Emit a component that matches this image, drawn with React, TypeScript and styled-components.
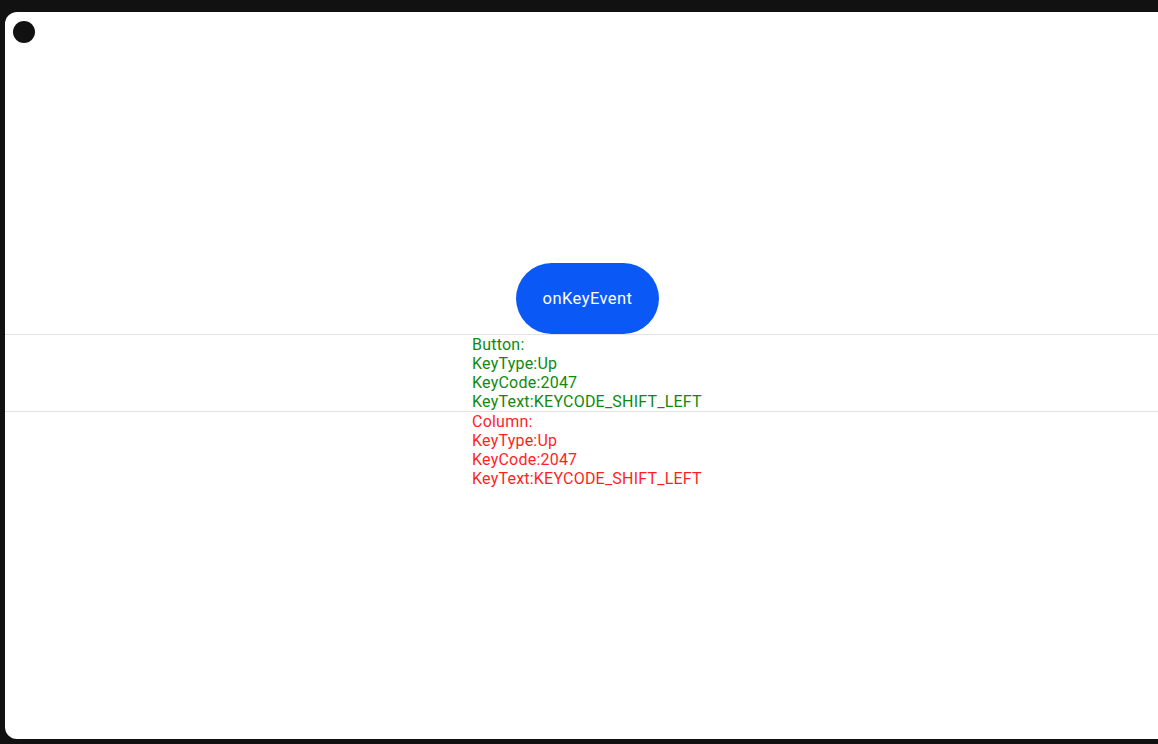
import styled, { createGlobalStyle } from "styled-components";

const GlobalStyle = createGlobalStyle`
  html, body {
    margin: 0;
    padding: 0;
    width: 1158px;
    height: 744px;
    overflow: hidden;
    background: #111111;
  }
`;

const Frame = styled.div`
  width: 1158px;
  height: 744px;
  box-sizing: border-box;
  padding: 12px 0 5px 5px;
  background: #111111;
  overflow: hidden;
`;

const Screen = styled.div`
  position: relative;
  width: 1165px;
  height: 727px;
  background: #ffffff;
  border-radius: 12px 0 0 12px;
  display: flex;
  flex-direction: column;
  justify-content: center;
  font-family: "Roboto", "Noto Sans", sans-serif;
`;

const Camera = styled.div`
  position: absolute;
  left: 8px;
  top: 9px;
  width: 22px;
  height: 22px;
  border-radius: 50%;
  background: #111111;
`;

const KeyButton = styled.button`
  align-self: center;
  width: 143px;
  height: 71px;
  border: none;
  border-radius: 36px;
  background: #0a59f7;
  color: #ffffff;
  font-family: inherit;
  font-size: 16.5px;
  letter-spacing: 0.45px;
  padding: 0;
`;

const Divider = styled.div`
  height: 1px;
  background: #e2e2e2;
`;

const Log = styled.div<{ $color: string }>`
  align-self: center;
  width: 231px;
  color: ${(p) => p.$color};
  font-size: 16px;
  line-height: 19px;
  letter-spacing: 0.22px;
  white-space: pre;
`;

const Line = styled.div``;

const logs = [
  { title: "Button:", color: "#0f8a0f" },
  { title: "Column:", color: "#ff1f1f" },
];

export default function App() {
  return (
    <>
      <GlobalStyle />
      <Frame>
        <Screen>
          <Camera />
          <KeyButton>onKeyEvent</KeyButton>
          {logs.map((log) => (
            <div key={log.title} style={{ display: "contents" }}>
              <Divider />
              <Log $color={log.color}>
                <Line>{log.title}</Line>
                <Line>KeyType:Up</Line>
                <Line>KeyCode:2047</Line>
                <Line>KeyText:KEYCODE_SHIFT_LEFT</Line>
              </Log>
            </div>
          ))}
        </Screen>
      </Frame>
    </>
  );
}
